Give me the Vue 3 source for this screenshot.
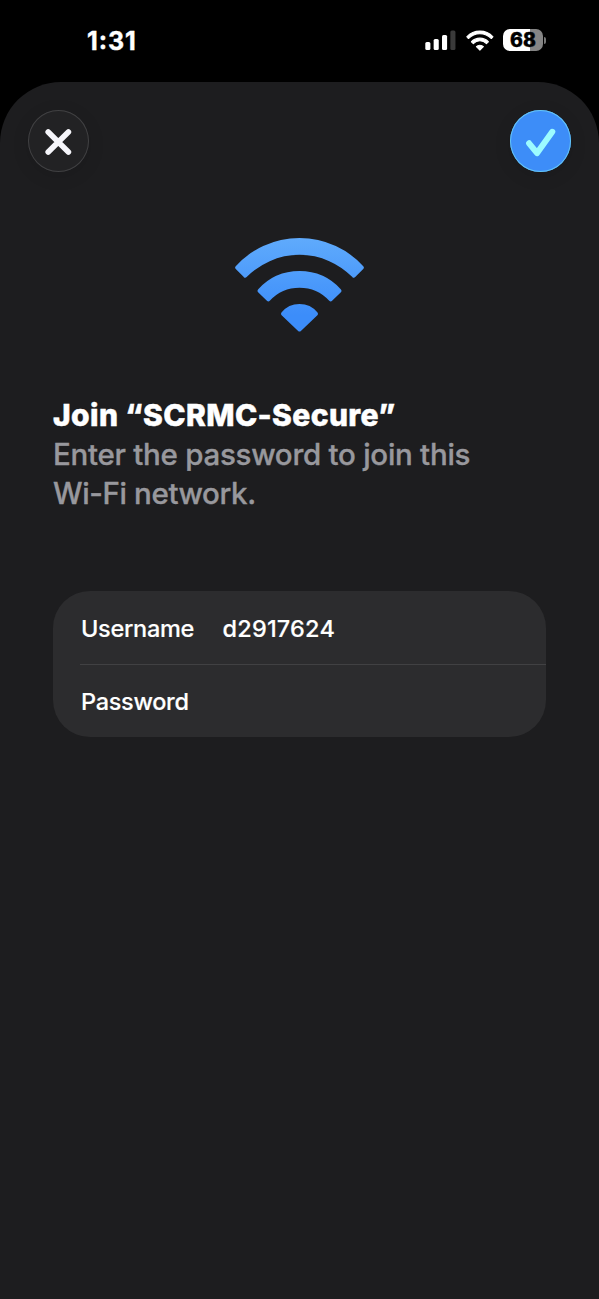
<script setup>
import { ref } from 'vue'

const network = 'SCRMC-Secure'
const username = ref('d2917624')
const battery = 68
const bars = [8, 11, 15, 19.5]
</script>

<template>
  <div class="screen">
    <header class="status">
      <span class="time">1<span class="colon">:</span>31</span>
      <div class="indicators">
        <svg class="signal" width="31" height="20" viewBox="0 0 31 20">
          <rect
            v-for="(h, i) in bars"
            :key="i"
            :x="0.3 + i * 8.35"
            :y="20 - h"
            width="5.1"
            :height="h"
            rx="1.5"
            :fill="i === 3 ? '#3a3a3a' : '#fff'"
          />
        </svg>
        <svg class="wifi-small" width="28" height="21" viewBox="234 236 132 98" preserveAspectRatio="none">
          <g fill="#fff" stroke="#fff" stroke-width="5" stroke-linejoin="round">
            <path d="M237.5 267.5A86 86 0 0 1 361.5 267.5L353.5 275.7A76 76 0 0 0 245.5 275.7Z" />
            <path d="M259.5 290.8A56 56 0 0 1 339.5 290.8L330.5 299.3A43 43 0 0 0 268.5 299.3Z" />
            <path d="M283 314A23 23 0 0 1 316 314L299.5 330Z" />
          </g>
        </svg>
        <div class="battery">
          <div class="cell"><span>{{ battery }}</span></div>
          <i class="nub"></i>
        </div>
      </div>
    </header>

    <main class="sheet">
      <nav class="actions">
        <button class="round close" aria-label="Close">
          <svg width="61" height="61" viewBox="0 0 61 61">
            <path d="M20.2 20.9L40.4 41.1M40.4 20.9L20.2 41.1" />
          </svg>
        </button>
        <button class="round confirm" aria-label="Join">
          <svg width="61" height="61" viewBox="0 0 61 61">
            <path d="M19.1 32.3L27.1 42.1L42.3 20.8" />
          </svg>
        </button>
      </nav>

      <svg class="wifi" width="132" height="98" viewBox="234 236 132 98">
        <defs>
          <linearGradient id="sky" gradientUnits="userSpaceOnUse" x1="0" y1="237" x2="0" y2="315">
            <stop offset="0" stop-color="#60abfc" />
            <stop offset="1" stop-color="#3c8dfa" />
          </linearGradient>
        </defs>
        <g fill="url(#sky)" stroke="url(#sky)" stroke-width="4" stroke-linejoin="round">
          <path d="M237.2 267.5A84.5 84.5 0 0 1 361.8 267.5L353.8 275.7A76 76 0 0 0 245.2 275.7Z" />
          <path d="M259.5 290.8A54 54 0 0 1 339.5 290.8L330.7 299.3A42.5 42.5 0 0 0 268.3 299.3Z" />
          <path d="M283 313.8A21.5 21.5 0 0 1 316 313.8L299.5 329.5Z" />
        </g>
      </svg>

      <section class="intro">
        <h1><span>Join “{{ network }}”</span></h1>
        <p><span class="l1">Enter the password to join this</span><br /><span class="l2">Wi-Fi network.</span></p>
      </section>

      <form class="card" @submit.prevent>
        <div class="row"><span class="label">Username</span><span class="value">{{ username }}</span></div>
        <div class="row"><span class="pass">Password</span></div>
      </form>
    </main>
  </div>
</template>

<style>
html, body { margin: 0; background: #000; }
</style>

<style scoped>
.screen {
  box-sizing: border-box;
  width: 599px;
  height: 1299px;
  background: #000;
  color: #fff;
  font-family: Inter, "Liberation Sans", sans-serif;
  overflow: hidden;
  display: flex;
  flex-direction: column;
}
.status {
  height: 82px;
  flex: none;
  box-sizing: border-box;
  padding: 0 53px 0 87px;
  display: flex;
  justify-content: space-between;
  align-items: flex-start;
}
.time {
  margin-top: 26px;
  font-size: 25px;
  line-height: 30px;
  font-weight: 700;
  letter-spacing: 0.9px;
  -webkit-text-stroke: 0.4px currentColor;
}
.colon { position: relative; top: -1px; }
.indicators { display: flex; margin-top: 29px; height: 22px; }
.signal { margin: 1px 10px 0 0; overflow: visible; }
.wifi-small { margin: 1px 9px 0 0; }
.battery { display: flex; align-items: center; gap: 1px; }
.cell {
  width: 40px;
  height: 22px;
  border-radius: 7px;
  background: linear-gradient(90deg, #fff 68%, #858585 68%);
  color: #000;
  font-size: 19.5px;
  line-height: 23px;
  font-weight: 800;
  text-align: center;
  -webkit-text-stroke: 0.4px currentColor;
}
.nub { width: 2px; height: 7px; border-radius: 0 3px 3px 0; background: #777; }
.sheet {
  flex: 1;
  background: #1d1d1f;
  border-radius: 61px 61px 0 0;
  display: flex;
  flex-direction: column;
  align-items: center;
}
.actions {
  box-sizing: border-box;
  width: 100%;
  padding: 28px 28px 0;
  display: flex;
  justify-content: space-between;
}
.round {
  box-sizing: border-box;
  width: 61px;
  height: 62px;
  padding: 0;
  border: 0;
  border-radius: 50%;
}
.round svg { display: block; fill: none; stroke-linecap: round; stroke-linejoin: round; }
.close { background: #222224; box-shadow: inset 0 0 0 1px #414143, 0 4px 18px rgba(0, 0, 0, 0.1); }
.close path { stroke: #f5f5fa; stroke-width: 5.6; }
.confirm { background: #3d8df8; box-shadow: inset 0 0 0 1px #64c5f5, 0 4px 18px rgba(0, 0, 0, 0.1); }
.confirm path { stroke: #9cfbff; stroke-width: 6; }
.wifi { margin-top: 64px; flex: none; }
.intro { width: 493px; margin-top: 62px; }
h1, p { margin: 0; white-space: nowrap; line-height: 39px; }
h1 { font-size: 30px; font-weight: 800; letter-spacing: 0.38px; -webkit-text-stroke: 0.5px currentColor; }
p { font-size: 29.5px; font-weight: 500; color: #98989d; -webkit-text-stroke: 0.35px currentColor; }
.l1 { letter-spacing: -0.27px; }
.l2 { letter-spacing: -0.38px; }
.card {
  width: 493px;
  height: 146px;
  margin-top: 78px;
  background: #2c2c2e;
  border-radius: 37px;
}
.row { height: 73px; margin-left: 28px; padding-top: 2px; box-sizing: border-box; display: flex; align-items: center; font-size: 23.5px; font-weight: 500; line-height: 30px; -webkit-text-stroke: 0.15px currentColor; }
.row + .row { box-shadow: inset 0 1px #414143; margin-left: 27px; padding-left: 1px; }
.label { width: 141.5px; }
.label, .pass { letter-spacing: -0.3px; }
.value { letter-spacing: 0.2px; }
</style>
